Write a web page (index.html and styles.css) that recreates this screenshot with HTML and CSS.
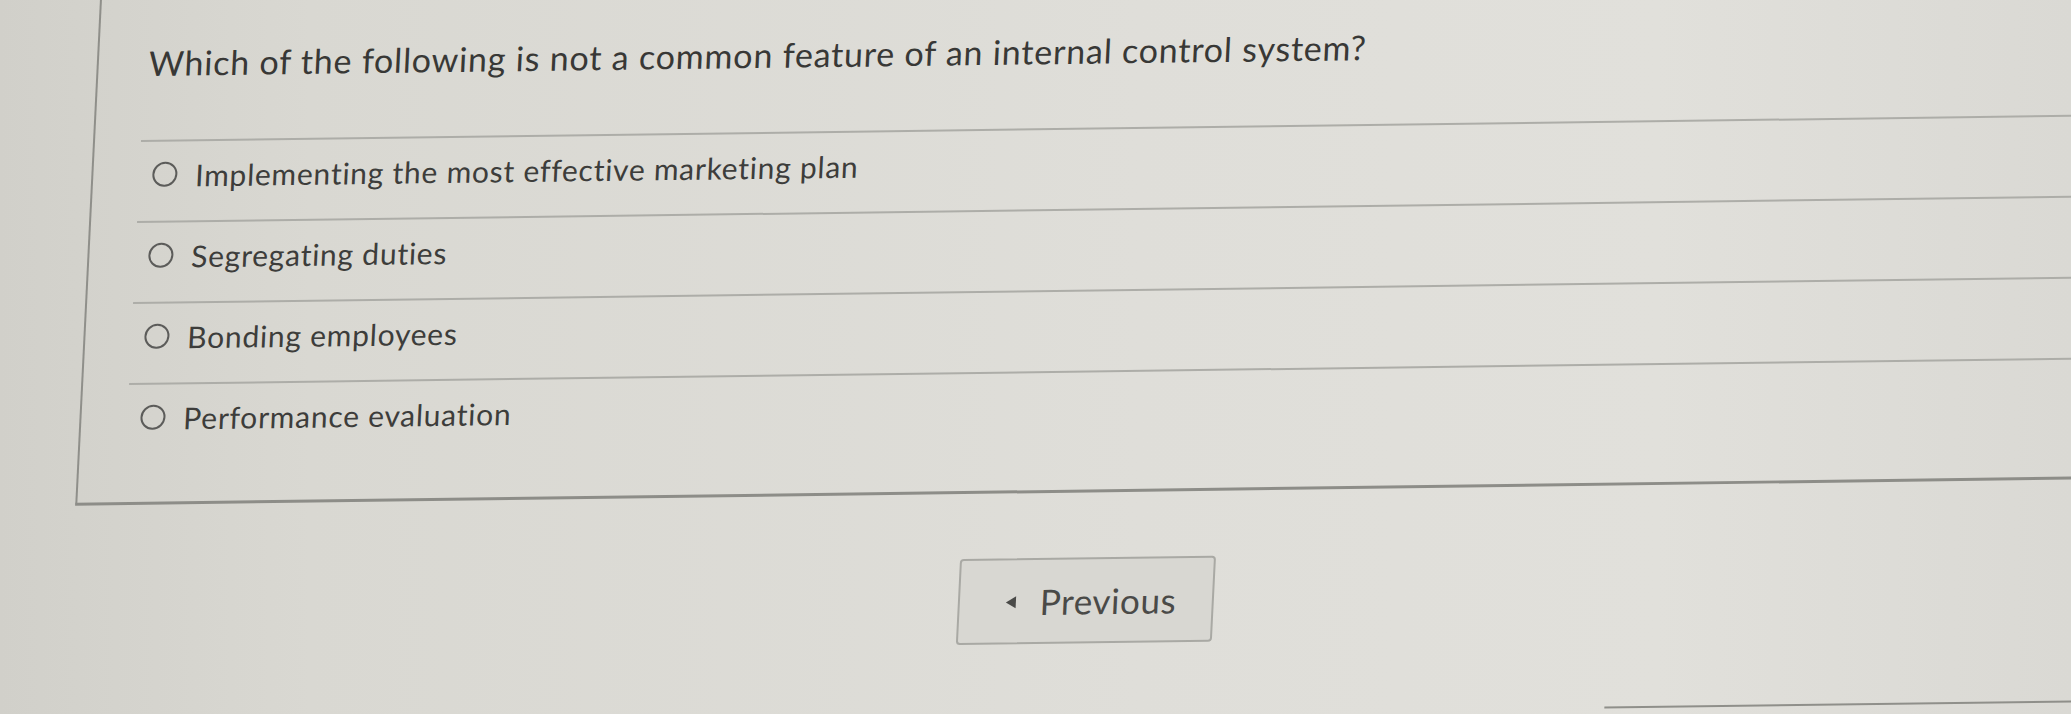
FILE: index.html
```
<!doctype html>
<html>
<head>
<meta charset="utf-8">
<title>Question</title>
<link rel="stylesheet" href="styles.css">
</head>
<body>
<section class="page">
	<div class="panel">
		<h2 class="question">Which of the following is not a common feature of an internal control system?</h2>
		<ul class="choices">
			<li class="choice"><span class="radio"></span><span class="label">Implementing the most effective marketing plan</span></li>
			<li class="choice"><span class="radio"></span><span class="label">Segregating duties</span></li>
			<li class="choice"><span class="radio"></span><span class="label">Bonding employees</span></li>
			<li class="choice"><span class="radio"></span><span class="label">Performance evaluation</span></li>
		</ul>
	</div>
	<div class="pager">
		<a class="btn-prev"><span class="arrow"></span><span>Previous</span></a>
	</div>
	<div class="next-card"></div>
</section>
</body>
</html>
```
FILE: styles.css
```
html,body{height:100%;}
body{margin:0;overflow:hidden;font-family:Lato,"Open Sans",sans-serif;color:#3d3d3b;background:linear-gradient(90deg,#d1d0ca 0%,#d9d8d2 15%,#dfded9 55%,#e1e0db 80%,#dad9d4 100%);}
.page{width:2300px;padding-left:100px;transform:skew(-2.8deg,-0.75deg);transform-origin:0 0;}
.panel{border-left:2px solid #8f8f8a;border-bottom:3px solid #8d8d88;padding-bottom:38px;}
.question{margin:0;padding:45px 0 0 50px;font-size:34px;line-height:40px;letter-spacing:0.8px;font-weight:normal;color:#383836;}
.choices{list-style:none;margin:57px 0 0 46px;padding:0;}
.choice{display:flex;align-items:center;height:81px;box-sizing:border-box;padding-bottom:14px;border-top:2px solid #adada8;}
.radio{width:21px;height:21px;margin-left:13px;border:2px solid #5c5c5a;border-radius:50%;flex:none;}
.label{margin-left:18px;font-size:30px;line-height:34px;letter-spacing:0.75px;}
.pager{padding:65px 0 0 888px;}
.btn-prev{display:flex;align-items:center;width:256px;height:86px;box-sizing:border-box;padding-left:46px;border:2px solid #a9a9a4;border-radius:4px;background:#d8d7d2;font-size:35px;letter-spacing:0.6px;color:#4a4a48;}
.arrow{width:0;height:0;border-top:6px solid transparent;border-bottom:6px solid transparent;border-right:10px solid #4a4a48;margin-right:24px;margin-top:2px;}
.next-card{margin:70px 0 0 1540px;height:200px;border-top:2px solid #8f8f8a;}
```
